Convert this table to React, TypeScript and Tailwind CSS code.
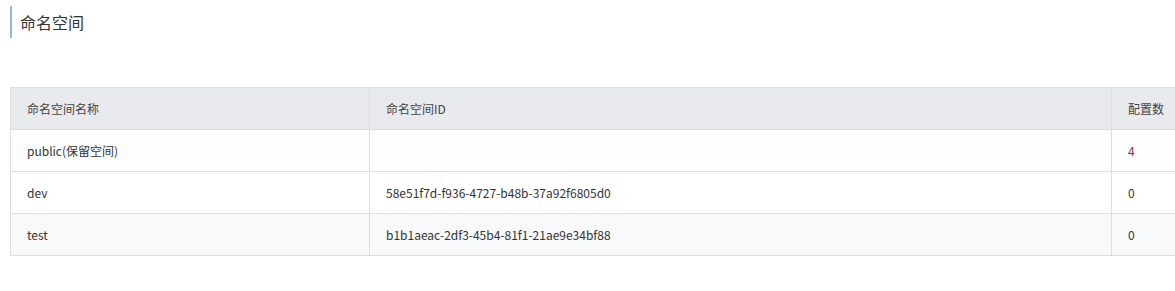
const FONT = { fontFamily: '"Microsoft YaHei", "Noto Sans CJK SC", "Noto Sans", sans-serif' }

const rows = [
  { name: 'public(保留空间)', id: '', count: '4', bg: 'bg-[#fcfefd]', red: true },
  { name: 'dev', id: '58e51f7d-f936-4727-b48b-37a92f6805d0', count: '0', bg: 'bg-white', red: false },
  { name: 'test', id: 'b1b1aeac-2df3-45b4-81f1-21ae9e34bf88', count: '0', bg: 'bg-[#f8f9fb]', red: false },
]

export default function App() {
  return (
    <div className="w-[1175px] h-[291px] overflow-hidden bg-white text-[#333]" style={FONT}>
      <div className="pt-[6px] pl-[10px]">
        {/* page title */}
        <div className="border-l-2 border-[#8fb9e3] pl-[8px] h-[32px] flex items-center">
          <h2 className="text-[16px] leading-none text-[#333]">命名空间</h2>
        </div>

        {/* namespace table */}
        <div className="mt-[49px] w-[1220px] border border-[#dcdee2] text-[12px] text-[#333]">
          <div className="flex h-[42px] bg-[#e9eaee] border-b border-[#dcdee2] text-[#444]">
            <div className="w-[359px] border-r border-[#dcdee2] flex items-center pl-[16px]">命名空间名称</div>
            <div className="w-[742px] border-r border-[#dcdee2] flex items-center pl-[16px]">命名空间ID</div>
            <div className="flex-1 flex items-center pl-[16px]">配置数</div>
          </div>
          {rows.map((r, i) => (
            <div
              key={r.name}
              className={`flex ${r.bg} ${i < rows.length - 1 ? 'h-[42px] border-b border-[#dcdee2]' : 'h-[41px]'}`}
            >
              <div className="w-[359px] border-r border-[#dcdee2] flex items-center pl-[16px]">{r.name}</div>
              <div className="w-[742px] border-r border-[#dcdee2] flex items-center pl-[16px]">{r.id}</div>
              <div className={`flex-1 flex items-center pl-[16px] ${r.red ? 'text-[#a8262e]' : ''}`}>{r.count}</div>
            </div>
          ))}
        </div>
      </div>
    </div>
  )
}
